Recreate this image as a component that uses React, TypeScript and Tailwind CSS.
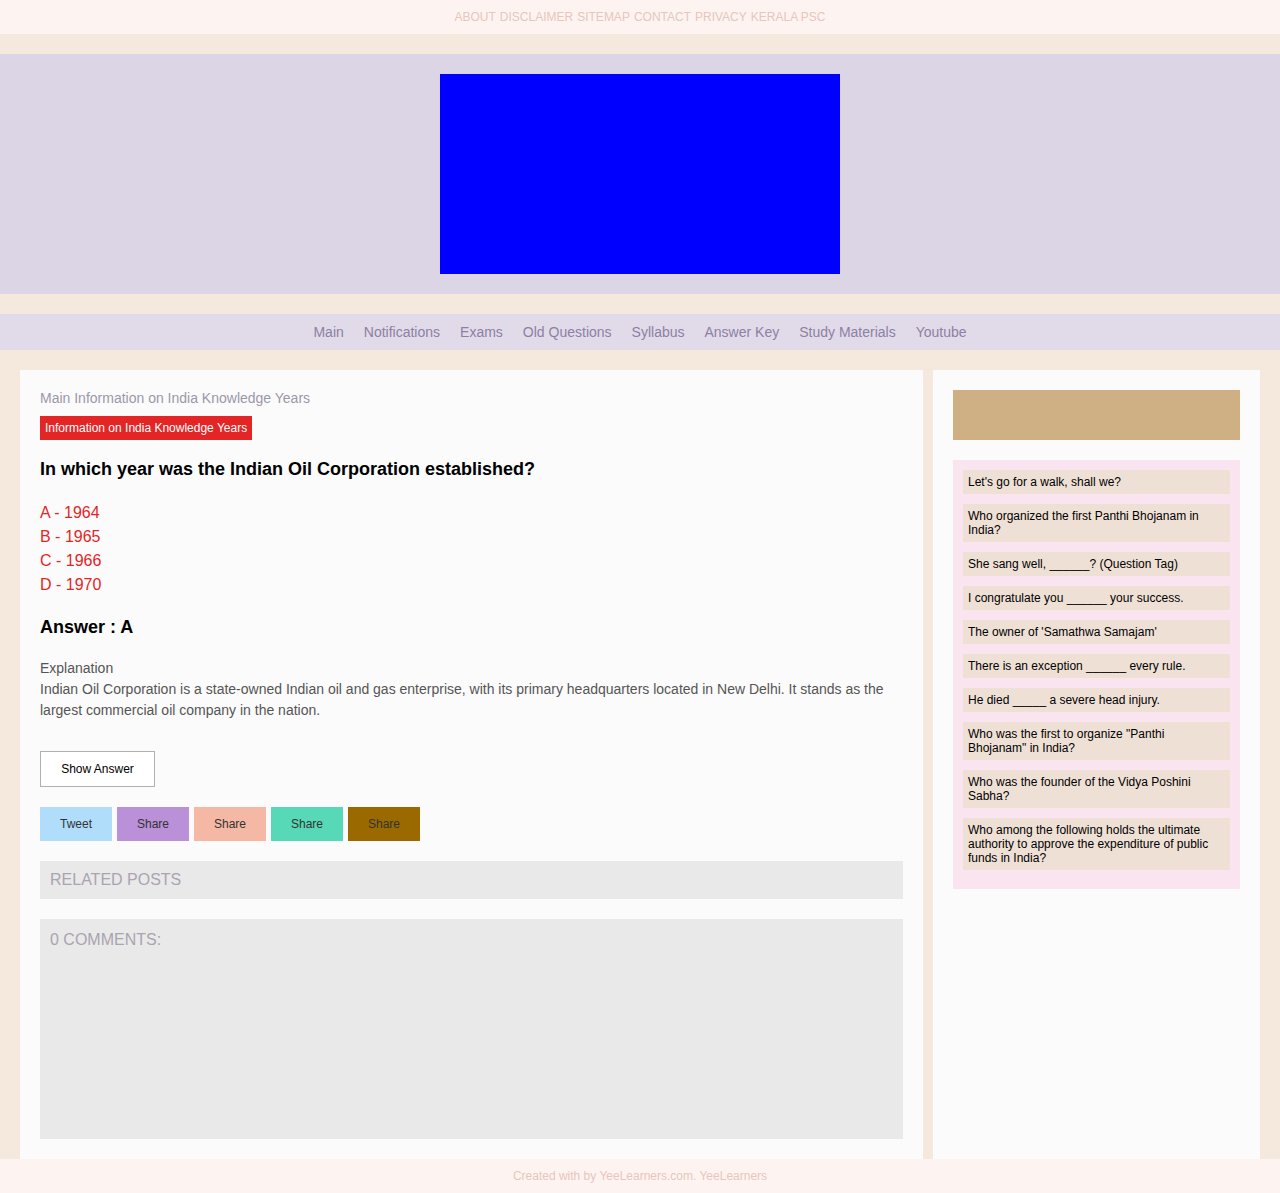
import React from 'react';

const topLinks = ['ABOUT', 'DISCLAIMER', 'SITEMAP', 'CONTACT', 'PRIVACY', 'KERALA PSC'];
const navLinks = ['Main', 'Notifications', 'Exams', 'Old Questions', 'Syllabus', 'Answer Key', 'Study Materials', 'Youtube'];
const options = ['A - 1964', 'B - 1965', 'C - 1966', 'D - 1970'];

const shares = [
  { label: 'Tweet', bg: 'bg-[#b0ddfa]' },
  { label: 'Share', bg: 'bg-[#ba90d8]' },
  { label: 'Share', bg: 'bg-[#f4b8a4]' },
  { label: 'Share', bg: 'bg-[#57d8b6]' },
  { label: 'Share', bg: 'bg-[#9a6a00]' },
];

const sideQuestions = [
  "Let's go for a walk, shall we?",
  'Who organized the first Panthi Bhojanam in India?',
  'She sang well, ______? (Question Tag)',
  'I congratulate you ______ your success.',
  "The owner of 'Samathwa Samajam'",
  'There is an exception ______ every rule.',
  'He died _____ a severe head injury.',
  'Who was the first to organize "Panthi Bhojanam" in India?',
  'Who was the founder of the Vidya Poshini Sabha?',
  'Who among the following holds the ultimate authority to approve the expenditure of public funds in India?',
];

const App: React.FC = () => {
  return (
    <div className="min-h-[1193px] bg-[#f5e8dd] font-['Liberation_Sans',Arial,sans-serif] flex flex-col">
      {/* top links */}
      <div className="h-[34px] bg-[#fdf4f2] flex items-center justify-center text-xs text-[#e8c5bd]">
        <div className="flex gap-[4px]">
          {topLinks.map((l) => (
            <span key={l}>{l}</span>
          ))}
        </div>
      </div>

      {/* header */}
      <div className="mt-5 h-60 bg-[#dcd5e5] flex items-center justify-center">
        <div className="w-[400px] h-[200px] bg-[#0000ff]" />
      </div>

      {/* nav */}
      <nav className="mt-5 h-9 bg-[#e1dbe9] flex items-center justify-center gap-5 text-sm text-[#8d80a3]">
        {navLinks.map((n) => (
          <span key={n}>{n}</span>
        ))}
      </nav>

      {/* main */}
      <div className="flex-1 flex gap-[10px] px-5 pt-5">
        <main className="w-[903px] bg-[#fbfbfb] p-5">
          <div className="text-sm text-[#9c98a8] leading-4">Main Information on India Knowledge Years</div>
          <div className="mt-[10px] inline-block bg-[#e32526] text-white text-xs leading-6 px-[5px]">
            Information on India Knowledge Years
          </div>
          <h1 className="mt-[17px] text-lg font-bold text-black leading-6">
            In which year was the Indian Oil Corporation established?
          </h1>
          <div className="mt-5 text-base text-[#e32526] leading-6">
            {options.map((o) => (
              <div key={o}>{o}</div>
            ))}
          </div>
          <div className="mt-[18px] text-lg font-bold text-black leading-6">Answer : A</div>
          <div className="mt-[19px] text-sm text-[#555] leading-[21px]">
            <div>Explanation</div>
            <p>
              Indian Oil Corporation is a state-owned Indian oil and gas enterprise, with its primary headquarters located in New Delhi. It stands as the largest commercial oil company in the nation.
            </p>
          </div>
          <button className="mt-[30px] w-[115px] h-9 border border-[#b0b0b0] bg-white text-xs text-black">
            Show Answer
          </button>
          <div className="mt-5 flex gap-[5px]">
            {shares.map((s, i) => (
              <div key={i} className={`w-[72px] h-[34px] flex items-center justify-center text-xs text-[#333] ${s.bg}`}>
                {s.label}
              </div>
            ))}
          </div>
          <div className="mt-5 h-[38px] bg-[#e9e9e9] flex items-center px-[10px] text-base text-[#a9a4b0]">
            RELATED POSTS
          </div>
          <div className="mt-5 h-[220px] bg-[#e9e9e9] px-[10px] py-[9px] text-base text-[#a9a4b0]">
            0 COMMENTS:
          </div>
        </main>

        <aside className="w-[327px] bg-[#fbfbfb] p-5">
          <div className="h-[50px] bg-[#cfb084]" />
          <div className="mt-5 bg-[#fae4ef] p-[10px] pb-[19px] flex flex-col gap-[10px]">
            {sideQuestions.map((q) => (
              <div key={q} className="bg-[#efe0d6] px-[5px] py-[5px] text-xs leading-[14px] text-black">
                {q}
              </div>
            ))}
          </div>
        </aside>
      </div>

      {/* footer */}
      <footer className="h-[34px] bg-[#fdf4f2] flex items-center justify-center text-xs text-[#e8c5bd]">
        Created with by YeeLearners.com. YeeLearners
      </footer>
    </div>
  );
};

export default App;
